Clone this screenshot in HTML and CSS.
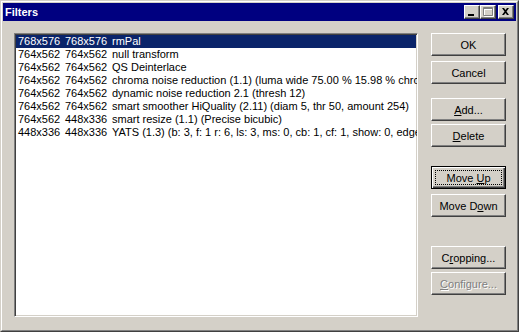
FILE: index.html
```html
<!DOCTYPE html>
<html lang="en">
<head>
    <meta charset="UTF-8">
    <title>Filters</title>
    <link rel="stylesheet" href="styles.css">
</head>
<body>
    <div class="window">
        <div class="frame">
            <div class="titlebar">
                <span class="title">Filters</span>
                <div class="caption-buttons">
                    <span class="cap-btn">
                        <svg width="14" height="12" viewBox="0 0 14 12"><rect x="3" y="8" width="6" height="2" fill="#000"/></svg>
                    </span>
                    <span class="cap-btn">
                        <svg width="14" height="12" viewBox="0 0 14 12">
                            <path d="M3.5 2.5h9v8h-9z M3 3.5h10" fill="none" stroke="#fff"/>
                            <path d="M2.5 1.5h9v8h-9z M2 2.5h10" fill="none" stroke="#808080"/>
                        </svg>
                    </span>
                    <span class="cap-btn close">
                        <svg width="14" height="12" viewBox="0 0 14 12"><path d="M3 2l2 0 1.5 2 1.5-2 2 0-2.5 3.5 2.5 3.5-2 0-1.5-2-1.5 2-2 0 2.5-3.5z" fill="#000"/></svg>
                    </span>
                </div>
            </div>

            <div class="client">
                <div class="listbox">
                    <div class="row selected"><span class="col">768x576</span><span class="col">768x576</span><span>rmPal</span></div>
                    <div class="row"><span class="col">764x562</span><span class="col">764x562</span><span>null transform</span></div>
                    <div class="row"><span class="col">764x562</span><span class="col">764x562</span><span>QS Deinterlace</span></div>
                    <div class="row"><span class="col">764x562</span><span class="col">764x562</span><span>chroma noise reduction (1.1) (luma wide 75.00 % 15.98 % chroma wide 100.00 %)</span></div>
                    <div class="row"><span class="col">764x562</span><span class="col">764x562</span><span>dynamic noise reduction 2.1 (thresh 12)</span></div>
                    <div class="row"><span class="col">764x562</span><span class="col">764x562</span><span>smart smoother HiQuality (2.11) (diam 5, thr 50, amount 254)</span></div>
                    <div class="row"><span class="col">764x562</span><span class="col">448x336</span><span>smart resize (1.1) (Precise bicubic)</span></div>
                    <div class="row"><span class="col">448x336</span><span class="col">448x336</span><span>YATS (1.3) (b: 3, f: 1 r: 6, ls: 3, ms: 0, cb: 1, cf: 1, show: 0, edge: 1)</span></div>
                </div>

                <div class="buttons">
                    <button class="btn">OK</button>
                    <button class="btn gap-small">Cancel</button>
                    <button class="btn gap-mid"><u>A</u>dd...</button>
                    <button class="btn gap-tiny"><u>D</u>elete</button>
                    <button class="btn default gap-large">Move <u>U</u>p</button>
                    <button class="btn gap-small">Move D<u>o</u>wn</button>
                    <button class="btn gap-huge">C<u>r</u>opping...</button>
                    <button class="btn disabled gap-tiny"><u>C</u>onfigure...</button>
                </div>
            </div>
        </div>
    </div>
</body>
</html>
```

FILE: styles.css
```css
body {
    margin: 0;
    font-family: Tahoma, 'Liberation Sans', sans-serif;
    font-size: 11px;
    background-color: #d4d0c8;
}

.window {
    width: 519px;
    height: 332px;
    box-sizing: border-box;
    border: 1px solid;
    border-color: #d4d0c8 #404040 #404040 #d4d0c8;
    background-color: #d4d0c8;
}

.frame {
    height: 100%;
    box-sizing: border-box;
    border: 1px solid;
    border-color: #fff #808080 #808080 #fff;
    padding: 1px;
}

.titlebar {
    height: 18px;
    background-color: #000080;
    display: flex;
    justify-content: space-between;
}

.title {
    color: #fff;
    font-weight: bold;
    line-height: 18px;
    padding-left: 2px;
}

.caption-buttons {
    display: flex;
    margin: 2px 2px 0 0;
}

.cap-btn {
    width: 16px;
    height: 14px;
    box-sizing: border-box;
    border: 1px solid;
    border-color: #fff #404040 #404040 #fff;
    box-shadow: inset -1px -1px #808080;
    background-color: #d4d0c8;
}

.cap-btn svg {
    display: block;
}

.cap-btn.close {
    margin-left: 2px;
}

.client {
    display: flex;
    gap: 13px;
    padding: 12px 9px 0 11px;
}

.listbox {
    width: 404px;
    height: 284px;
    box-sizing: border-box;
    border: 1px solid;
    border-color: #808080 #fff #fff #808080;
    box-shadow: inset 1px 1px #404040, inset -1px -1px #d4d0c8;
    background-color: #fff;
    padding: 1px 1px 0 1px;
    overflow: hidden;
}

.row {
    height: 13px;
    line-height: 13px;
    padding-left: 2px;
    white-space: nowrap;
    color: #000;
}

.row.selected {
    background-color: #0a246a;
    color: #fff;
}

.col {
    display: inline-block;
    width: 47px;
}

.buttons {
    display: flex;
    flex-direction: column;
}

.btn {
    position: relative;
    width: 75px;
    height: 23px;
    margin: 0;
    padding: 0;
    font-family: Tahoma, 'Liberation Sans', sans-serif;
    font-size: 11px;
    color: #000;
    background-color: #d4d0c8;
    border: 1px solid;
    border-color: #fff #404040 #404040 #fff;
    box-shadow: inset -1px -1px #808080;
}

.btn.default {
    border-color: #000;
    box-shadow: inset 1px 1px #fff, inset -1px -1px #404040, inset -2px -2px #808080;
}

.btn.default::after {
    content: "";
    position: absolute;
    top: 3px;
    left: 3px;
    right: 3px;
    bottom: 3px;
    border: 1px dotted #000;
}

.btn.disabled {
    color: #808080;
    text-shadow: 1px 1px #fff;
}

.gap-tiny {
    margin-top: 3px;
}

.gap-small {
    margin-top: 5px;
}

.gap-mid {
    margin-top: 14px;
}

.gap-large {
    margin-top: 19px;
}

.gap-huge {
    margin-top: 29px;
}
```
